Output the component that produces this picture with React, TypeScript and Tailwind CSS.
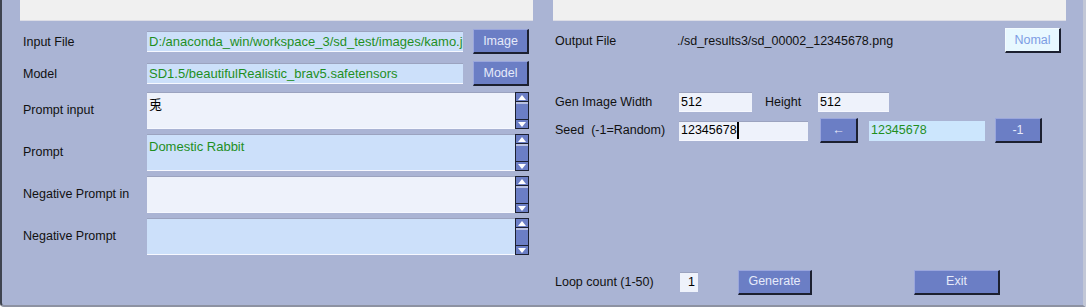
import React from 'react';

const FONT = "font-['Liberation_Sans',Arial,'Noto_Sans_CJK_JP',sans-serif]";

function Btn({ label, w, light }: { label: string; w: string; light?: boolean }) {
  return (
    <div
      className={`${w} h-[25px] flex items-center justify-center text-[12.5px] border-t border-l border-r-2 border-b-2 border-r-[#1c2030] border-b-[#1c2030] ${
        light
          ? 'bg-[#e8f8ff] text-[#7d9de4] border-t-[#f4fbff] border-l-[#f4fbff]'
          : 'bg-[#6b7ec5] text-[#e6eafa] border-t-[#9aa6dc] border-l-[#9aa6dc]'
      }`}
    >
      {label}
    </div>
  );
}

function Field({ value, w, blue, green, h = 'h-[21px]', size = 'text-[12.5px]', children }: { value?: string; w: string; blue?: boolean; green?: boolean; h?: string; size?: string; children?: React.ReactNode }) {
  return (
    <div
      className={`${w} ${h} ${size} flex items-center px-[2px] border-t border-t-[#9ba3bf] border-b border-b-[#f6f8ff] whitespace-nowrap overflow-hidden ${
        blue ? 'bg-[#cce0fa]' : 'bg-[#eef2fb]'
      } ${green ? 'text-[#1f8f1f]' : 'text-black'}`}
    >
      {value}
      {children}
    </div>
  );
}

function Arrow({ up }: { up?: boolean }) {
  return (
    <div className="h-[10px] bg-[#6b7ec5] border border-[#1c2030] flex items-center justify-center">
      <svg width="8" height="5" viewBox="0 0 8 5">
        {up ? <polygon points="0,5 4,0 8,5" fill="#fff" /> : <polygon points="0,0 8,0 4,5" fill="#fff" />}
      </svg>
    </div>
  );
}

function Scroll() {
  return (
    <div className="w-[14px] h-[37px] flex flex-col">
      <Arrow up />
      <div className="h-[2px] bg-[#b9c1e2] border-x border-[#1c2030]" />
      <div className="flex-1 bg-[#6b7ec5] border-x border-[#1c2030]" />
      <Arrow />
    </div>
  );
}

function TextRow({ label, value, blue, top }: { label: string; value?: string; blue?: boolean; top: string }) {
  return (
    <div className={`${top} h-[37px] flex items-center`}>
      <div className="w-[124px] text-[12.5px] text-[#111]">{label}</div>
      <div
        className={`w-[368px] h-[37px] px-[2px] pt-[2px] text-[13px] border-t border-t-[#9ba3bf] border-b border-b-[#f6f8ff] ${
          blue ? 'bg-[#cce0fa] text-[#1f8f1f]' : 'bg-[#eef2fb] text-black'
        }`}
      >
        {value}
      </div>
      <Scroll />
    </div>
  );
}

export default function App() {
  return (
    <div className={`${FONT} w-[1086px] h-[307px] flex bg-[#aab4d4] border-l-2 border-l-[#3f4450] border-b-2 border-b-[#8d92a2] border-r-[3px] border-r-[#c2c7d6] rounded-bl-[4px]`}>
      {/* left column */}
      <div className="w-[551px] flex flex-col">
        <div className="ml-[18px] w-[513px] h-[21px] bg-[#f0f0f0] border-b border-[#dcdde6]" />
        <div className="pl-[21px] flex flex-col">
          <div className="mt-[8px] h-[25px] flex items-center">
            <div className="w-[124px] text-[12.5px] text-[#111] pt-[1px]">Input File</div>
            <Field w="w-[316px]" blue green size="text-[13px]" value="D:/anaconda_win/workspace_3/sd_test/images/kamo.jpg" />
            <div className="ml-[10px]">
              <Btn label="Image" w="w-[56px]" />
            </div>
          </div>
          <div className="mt-[7px] h-[25px] flex items-center">
            <div className="w-[124px] text-[12.5px] text-[#111] pt-[1px]">Model</div>
            <Field w="w-[316px]" blue green size="text-[13px]" value="SD1.5/beautifulRealistic_brav5.safetensors" />
            <div className="ml-[10px]">
              <Btn label="Model" w="w-[56px]" />
            </div>
          </div>
          <TextRow top="mt-[6px]" label="Prompt input" value="兎" />
          <TextRow top="mt-[5px]" label="Prompt" value="Domestic Rabbit" blue />
          <TextRow top="mt-[5px]" label="Negative Prompt in" />
          <TextRow top="mt-[5px]" label="Negative Prompt" blue />
        </div>
      </div>

      {/* right column */}
      <div className="flex-1 flex flex-col">
        <div className="w-[513px] h-[21px] bg-[#f0f0f0] border-b border-[#dcdde6]" />
        <div className="pl-[2px] flex flex-col">
          <div className="mt-[7px] w-[506px] h-[25px] flex items-center">
            <div className="w-[122px] text-[12.5px] text-[#111] pt-[1px]">Output File</div>
            <div className="flex-1 text-[12.5px] text-[#111] pt-[1px]">./sd_results3/sd_00002_12345678.png</div>
            <Btn label="Nomal" w="w-[56px]" light />
          </div>

          <div className="mt-[39px] h-[20px] flex items-center">
            <div className="w-[124px] text-[12.5px] text-[#111]">Gen Image Width</div>
            <Field w="w-[73px]" h="h-[20px]" value="512" />
            <div className="ml-[13px] w-[53px] text-[12.5px] text-[#111]">Height</div>
            <Field w="w-[71px]" h="h-[20px]" value="512" />
          </div>

          <div className="mt-[6px] h-[25px] flex items-center">
            <div className="w-[124px] text-[12.5px] text-[#111] whitespace-pre">Seed  (-1=Random)</div>
            <Field w="w-[129px]" h="h-[20px]" value="12345678">
              <span className="w-[2px] h-[17px] bg-black" />
            </Field>
            <div className="ml-[12px]">
              <Btn label="←" w="w-[38px]" />
            </div>
            <div className="ml-[11px]">
              <div className="w-[116px] h-[20px] flex items-center px-[2px] text-[12.5px] bg-[#cce6fd] text-[#1f8f1f]">12345678</div>
            </div>
            <div className="ml-[10px]">
              <Btn label="-1" w="w-[47px]" />
            </div>
          </div>

          <div className="mt-[126px] h-[26px] flex items-center">
            <div className="w-[125px] text-[12.5px] text-[#111]">Loop count (1-50)</div>
            <div className="w-[18px] h-[20px] flex items-center justify-end pr-[3px] text-[12.5px] bg-[#eef2fb] border-t border-t-[#9ba3bf]">1</div>
            <div className="ml-[40px]">
              <Btn label="Generate" w="w-[74px]" />
            </div>
            <div className="ml-[102px]">
              <Btn label="Exit" w="w-[86px]" />
            </div>
          </div>
        </div>
      </div>
    </div>
  );
}
